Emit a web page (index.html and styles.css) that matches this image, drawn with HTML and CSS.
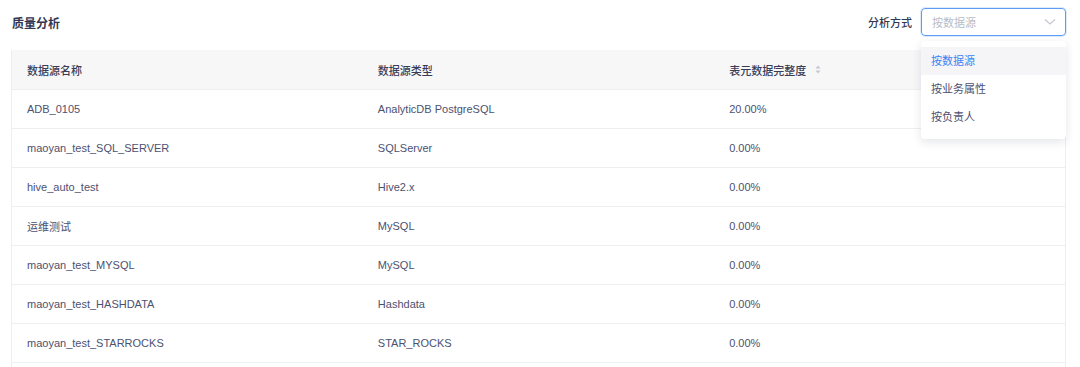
FILE: index.html
```html
<!DOCTYPE html>
<html lang="zh-CN">
<head>
<meta charset="utf-8">
<title>质量分析</title>
<link rel="stylesheet" href="styles.css">
</head>
<body>
<div class="page">
  <div class="toolbar">
    <h1 class="title">质量分析</h1>
    <div class="filter">
      <span class="filter-label">分析方式</span>
      <div class="select-wrap">
        <div class="select">
          <span class="placeholder">按数据源</span>
          <svg class="chevron" width="12" height="8" viewBox="0 0 12 8"><path d="M1 1.5 L6 6 L11 1.5" fill="none" stroke="#c4c7cf" stroke-width="1.2"/></svg>
        </div>
        <ul class="dropdown">
          <li class="option active">按数据源</li>
          <li class="option">按业务属性</li>
          <li class="option">按负责人</li>
        </ul>
      </div>
    </div>
  </div>
  <table class="grid">
    <thead>
      <tr>
        <th>数据源名称</th>
        <th>数据源类型</th>
        <th><span class="sortable">表元数据完整度<svg class="sort" width="6" height="9" viewBox="0 0 6 9"><path d="M3 0.5 L5.5 3.5 L0.5 3.5 Z" fill="#c4c7cf"/><path d="M3 8.5 L5.5 5.5 L0.5 5.5 Z" fill="#c4c7cf"/></svg></span></th>
      </tr>
    </thead>
    <tbody>
      <tr><td>ADB_0105</td><td>AnalyticDB PostgreSQL</td><td>20.00%</td></tr>
      <tr><td>maoyan_test_SQL_SERVER</td><td>SQLServer</td><td>0.00%</td></tr>
      <tr><td>hive_auto_test</td><td>Hive2.x</td><td>0.00%</td></tr>
      <tr><td>运维测试</td><td>MySQL</td><td>0.00%</td></tr>
      <tr><td>maoyan_test_MYSQL</td><td>MySQL</td><td>0.00%</td></tr>
      <tr><td>maoyan_test_HASHDATA</td><td>Hashdata</td><td>0.00%</td></tr>
      <tr><td>maoyan_test_STARROCKS</td><td>STAR_ROCKS</td><td>0.00%</td></tr>
      <tr><td>&nbsp;</td><td>&nbsp;</td><td>&nbsp;</td></tr>
    </tbody>
  </table>
</div>
</body>
</html>
```
FILE: styles.css
```css
* { box-sizing: border-box; }
html, body { margin: 0; padding: 0; background: #fff; }
body {
  font-family: "Liberation Sans", "Noto Sans CJK SC", sans-serif;
  font-size: 11px;
  color: #4d5170;
  overflow: hidden;
}
.page { padding: 8px 14px 0 11px; }
.toolbar {
  display: flex;
  justify-content: space-between;
  align-items: center;
  height: 28px;
  margin-bottom: 14px;
}
.title {
  margin: 0 0 0 1px;
  font-size: 12px;
  font-weight: 700;
  color: #33364f;
}
.filter { display: flex; align-items: center; gap: 9px; }
.filter-label { font-size: 11px; color: #33364f; font-weight: 500; }
.select-wrap { position: relative; }
.select {
  width: 145px;
  height: 28px;
  border: 1px solid #5c9cf7;
  border-radius: 4px;
  display: flex;
  align-items: center;
  justify-content: space-between;
  padding: 0 9px 0 10px;
  box-shadow: 0 0 0 1px rgba(92,156,247,0.2);
}
.placeholder { color: #b9bcc6; font-size: 11px; }
.dropdown {
  position: absolute;
  top: 33px;
  left: 0;
  width: 145px;
  margin: 0;
  padding: 6px 0 8px;
  list-style: none;
  background: #fff;
  border-radius: 4px;
  box-shadow: 0 3px 10px rgba(30, 40, 70, 0.12);
  z-index: 5;
}
.option {
  height: 28px;
  line-height: 29px;
  padding: 0 10px;
  color: #4d5170;
}
.option.active { background: #f5f5f7; color: #3a84f2; }
.grid {
  width: 100%;
  border-collapse: collapse;
  table-layout: fixed;
  border-left: 1px solid #eeeef0;
  border-right: 1px solid #eeeef0;
}
.grid th, .grid td {
  text-align: left;
  padding: 1px 15px 0;
  height: 39px;
  border-bottom: 1px solid #eeeff1;
  white-space: nowrap;
}
.grid th {
  background: #f7f7f8;
  font-weight: 500;
  color: #3a3d57;
}
.sortable { display: inline-flex; align-items: center; gap: 9px; }
.sort { display: block; }
```
